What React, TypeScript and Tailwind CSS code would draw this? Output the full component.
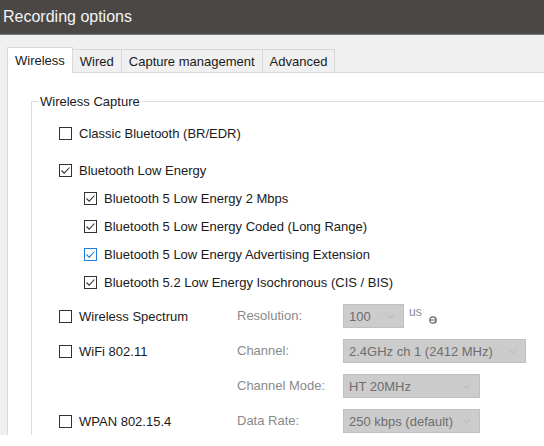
import { ChevronDown } from 'lucide-react';

type BoxProps = { checked?: boolean; blue?: boolean };

const CheckBox = ({ checked = false, blue = false }: BoxProps) => (
    <span
        className={`w-[13px] h-[13px] shrink-0 border bg-white flex items-center justify-center ${blue ? 'border-[#1f7fd8]' : 'border-[#333333]'}`}
    >
        {checked && (
            <svg width="11" height="11" viewBox="0 0 11 11">
                <polyline
                    points="1.5,5.5 4.2,8.2 9.5,2.5"
                    fill="none"
                    stroke={blue ? '#1f7fd8' : '#333333'}
                    strokeWidth="1.1"
                />
            </svg>
        )}
    </span>
);

const CheckRow = ({ label, checked, blue, sub }: { label: string; checked?: boolean; blue?: boolean; sub?: boolean }) => (
    <div className={`h-[28px] flex items-center gap-[7px] ${sub ? 'pl-[25px]' : ''}`}>
        <CheckBox checked={checked} blue={blue} />
        <span className="text-[13px] text-[#1a1a1a] leading-none">{label}</span>
    </div>
);

const Combo = ({ value, width }: { value: string; width: string }) => (
    <div className={`${width} h-[24px] bg-[#cccccc] border border-[#bfbfbf] flex items-center justify-between pl-[5px] pr-[6px]`}>
        <span className="text-[13px] text-[#6e6e6e] leading-none">{value}</span>
        <ChevronDown size={13} strokeWidth={1.2} className="text-[#a8a8a8]" />
    </div>
);

const tabs = ['Wireless', 'Wired', 'Capture management', 'Advanced'];

export default function App() {
    return (
        <div className="w-[544px] h-[446px] bg-white overflow-hidden font-['Liberation_Sans',Arial,sans-serif]">
            <div className="h-[435px] bg-[#f0f0f0] flex flex-col overflow-hidden">
                {/* Title bar */}
                <div className="h-[35px] shrink-0 bg-[#4a4745] border-b border-[#7b7977] flex items-center pl-[3px]">
                    <span className="text-[16px] text-[#f4f4f4]">Recording options</span>
                </div>

                {/* Tabs */}
                <div className="pl-[7px] pt-[12px] flex items-end relative z-10">
                    {tabs.map((t, i) =>
                        i === 0 ? (
                            <div
                                key={t}
                                className="h-[26px] px-[7px] bg-white border border-b-0 border-[#d9d9d9] flex items-center text-[13px] text-[#1a1a1a] -mb-px"
                            >
                                {t}
                            </div>
                        ) : (
                            <div
                                key={t}
                                className="h-[23px] px-[7px] bg-[#f0f0f0] border border-l-0 border-b-0 border-[#d9d9d9] flex items-center pt-[2px] text-[13px] text-[#1a1a1a]"
                            >
                                {t}
                            </div>
                        )
                    )}
                </div>

                {/* Pane */}
                <div className="ml-[7px] flex-1 bg-white border-l border-t border-[#d9d9d9] pl-[23px] pt-[21px]">
                    <fieldset className="w-[560px] h-[400px] border border-[#dcdcdc] pl-[6px]">
                        <legend className="px-[2px] text-[13px] text-[#1a1a1a] leading-[15px]">Wireless Capture</legend>
                        <div className="flex flex-col pt-[10px] pl-[21px]">
                            <CheckRow label="Classic Bluetooth (BR/EDR)" />
                            <div className="h-[9px]" />
                            <CheckRow label="Bluetooth Low Energy" checked />
                            <CheckRow label="Bluetooth 5 Low Energy 2 Mbps" checked sub />
                            <CheckRow label="Bluetooth 5 Low Energy Coded (Long Range)" checked sub />
                            <CheckRow label="Bluetooth 5 Low Energy Advertising Extension" checked blue sub />
                            <CheckRow label="Bluetooth 5.2 Low Energy Isochronous (CIS / BIS)" checked sub />
                            <div className="h-[6px]" />
                            <div className="grid grid-cols-[178px_106px_auto] auto-rows-[28px] gap-y-[7px] items-center text-[13px]">
                                <CheckRow label="Wireless Spectrum" />
                                <span className="text-[#8a8a8a]">Resolution:</span>
                                <div className="flex items-start gap-[5px]">
                                    <Combo value="100" width="w-[61px]" />
                                    <span className="text-[12px] text-[#8a8a8a] leading-none mt-[2px]">us</span>
                                    <svg width="8" height="8" viewBox="0 0 8 8" className="mt-[12px] ml-[2px]">
                                        <circle cx="4" cy="4" r="3.2" fill="none" stroke="#666" strokeWidth="1.3" />
                                        <line x1="1" y1="4" x2="7" y2="4" stroke="#666" strokeWidth="1.1" />
                                    </svg>
                                </div>

                                <CheckRow label="WiFi 802.11" />
                                <span className="text-[#8a8a8a]">Channel:</span>
                                <Combo value="2.4GHz ch 1 (2412 MHz)" width="w-[183px]" />

                                <span />
                                <span className="text-[#8a8a8a]">Channel Mode:</span>
                                <Combo value="HT 20MHz" width="w-[137px]" />

                                <CheckRow label="WPAN 802.15.4" />
                                <span className="text-[#8a8a8a]">Data Rate:</span>
                                <Combo value="250 kbps (default)" width="w-[137px]" />
                            </div>
                        </div>
                    </fieldset>
                </div>
            </div>
        </div>
    );
}
